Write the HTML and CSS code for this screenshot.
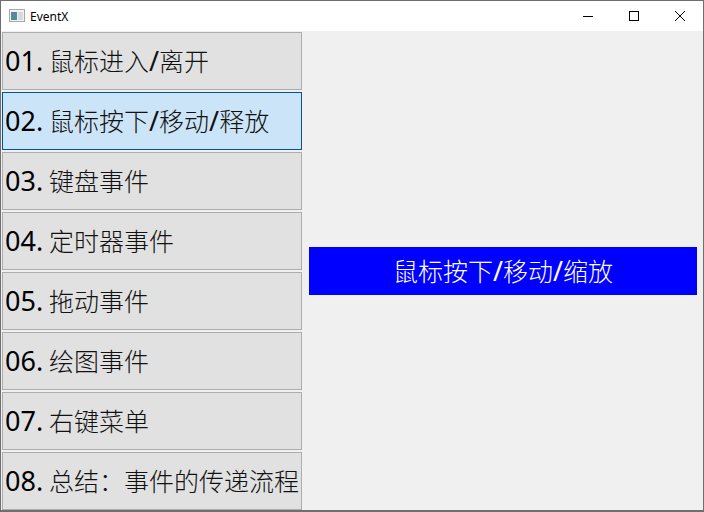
FILE: index.html
```html
<!DOCTYPE html>
<html lang="zh-CN">
<head>
    <meta charset="UTF-8">
    <meta name="viewport" content="width=device-width, initial-scale=1.0">
    <title>EventX</title>
    <link rel="stylesheet" href="styles.css">
</head>
<body>
    <div class="window">
        <div class="title-bar">
            <svg class="app-icon" width="16" height="16" viewBox="0 0 16 16">
                <rect x="0.5" y="1.5" width="15" height="12" fill="#f2f2f2" stroke="#a8a8a8"/>
                <rect x="2" y="4" width="6" height="8" fill="#4f8f8f"/>
                <rect x="3" y="4" width="4" height="3" fill="#5d7fb0"/>
                <rect x="9" y="4" width="5" height="8" fill="#d5dce0"/>
            </svg>
            <span class="app-name">EventX</span>
            <div class="window-controls">
                <button class="win-btn">
                    <svg width="10" height="10" viewBox="0 0 10 10"><path d="M0 5.5H10" stroke="#000" fill="none"/></svg>
                </button>
                <button class="win-btn">
                    <svg width="10" height="10" viewBox="0 0 10 10"><rect x="0.5" y="0.5" width="9" height="9" stroke="#000" fill="none"/></svg>
                </button>
                <button class="win-btn">
                    <svg width="10" height="10" viewBox="0 0 10 10"><path d="M0 0L10 10M10 0L0 10" stroke="#000" fill="none"/></svg>
                </button>
            </div>
        </div>

        <div class="content">
            <div class="menu">
                <button class="menu-btn"><span class="num">01.</span><span>鼠标进入<span class="sep">/</span>离开</span></button>
                <button class="menu-btn active"><span class="num">02.</span><span>鼠标按下<span class="sep">/</span>移动<span class="sep">/</span>释放</span></button>
                <button class="menu-btn"><span class="num">03.</span><span>键盘事件</span></button>
                <button class="menu-btn"><span class="num">04.</span><span>定时器事件</span></button>
                <button class="menu-btn"><span class="num">05.</span><span>拖动事件</span></button>
                <button class="menu-btn"><span class="num">06.</span><span>绘图事件</span></button>
                <button class="menu-btn"><span class="num">07.</span><span>右键菜单</span></button>
                <button class="menu-btn"><span class="num">08.</span><span>总结：事件的传递流程</span></button>
            </div>
            <div class="panel">
                <div class="demo-label"><span>鼠标按下<span class="sep">/</span>移动<span class="sep">/</span>缩放</span></div>
            </div>
        </div>
    </div>
</body>
</html>
```

FILE: styles.css
```css
* {
    box-sizing: border-box;
    margin: 0;
    padding: 0;
    font-family: "Noto Sans", "Noto Sans CJK SC", sans-serif;
}

body {
    width: 704px;
    height: 512px;
    overflow: hidden;
}

.window {
    width: 704px;
    height: 512px;
    display: flex;
    flex-direction: column;
    border: 1px solid #6e6e6e;
    border-bottom-width: 2px;
    background-color: #f0f0f0;
}

.title-bar {
    height: 30px;
    flex-shrink: 0;
    display: flex;
    align-items: center;
    padding-left: 8px;
    background-color: white;
}

.app-icon {
    margin-right: 5px;
}

.app-name {
    font-size: 12px;
    color: #000;
}

.window-controls {
    display: flex;
    margin-left: auto;
    height: 100%;
}

.win-btn {
    width: 46px;
    height: 100%;
    display: flex;
    align-items: center;
    justify-content: center;
    background: none;
    border: none;
}

.content {
    flex: 1;
    display: flex;
    min-height: 0;
}

.menu {
    width: 301px;
    flex-shrink: 0;
    display: flex;
    flex-direction: column;
    gap: 2px;
    padding: 1px 0 0 1px;
}

.menu-btn {
    height: 58px;
    flex-shrink: 0;
    display: flex;
    align-items: center;
    padding: 0 0 2px 2px;
    border: 1px solid #adadad;
    background-color: #e1e1e1;
    color: #111;
    font-size: 25px;
    font-weight: 300;
    white-space: pre;
    text-align: left;
}

.menu-btn.active {
    background-color: #cce4f7;
    border-color: #005499;
}

.num {
    width: 44px;
    color: #000;
    font-size: 27px;
    font-weight: 400;
}

.sep {
    font-size: 27px;
    font-weight: 400;
    line-height: 1;
}

.panel {
    flex: 1;
    display: flex;
    align-items: center;
    padding: 0 6px 0 7px;
}

.demo-label {
    width: 100%;
    height: 48px;
    display: flex;
    align-items: center;
    justify-content: center;
    padding-bottom: 2px;
    background-color: #0000ff;
    color: white;
    font-size: 25px;
    font-weight: 300;
}
```
